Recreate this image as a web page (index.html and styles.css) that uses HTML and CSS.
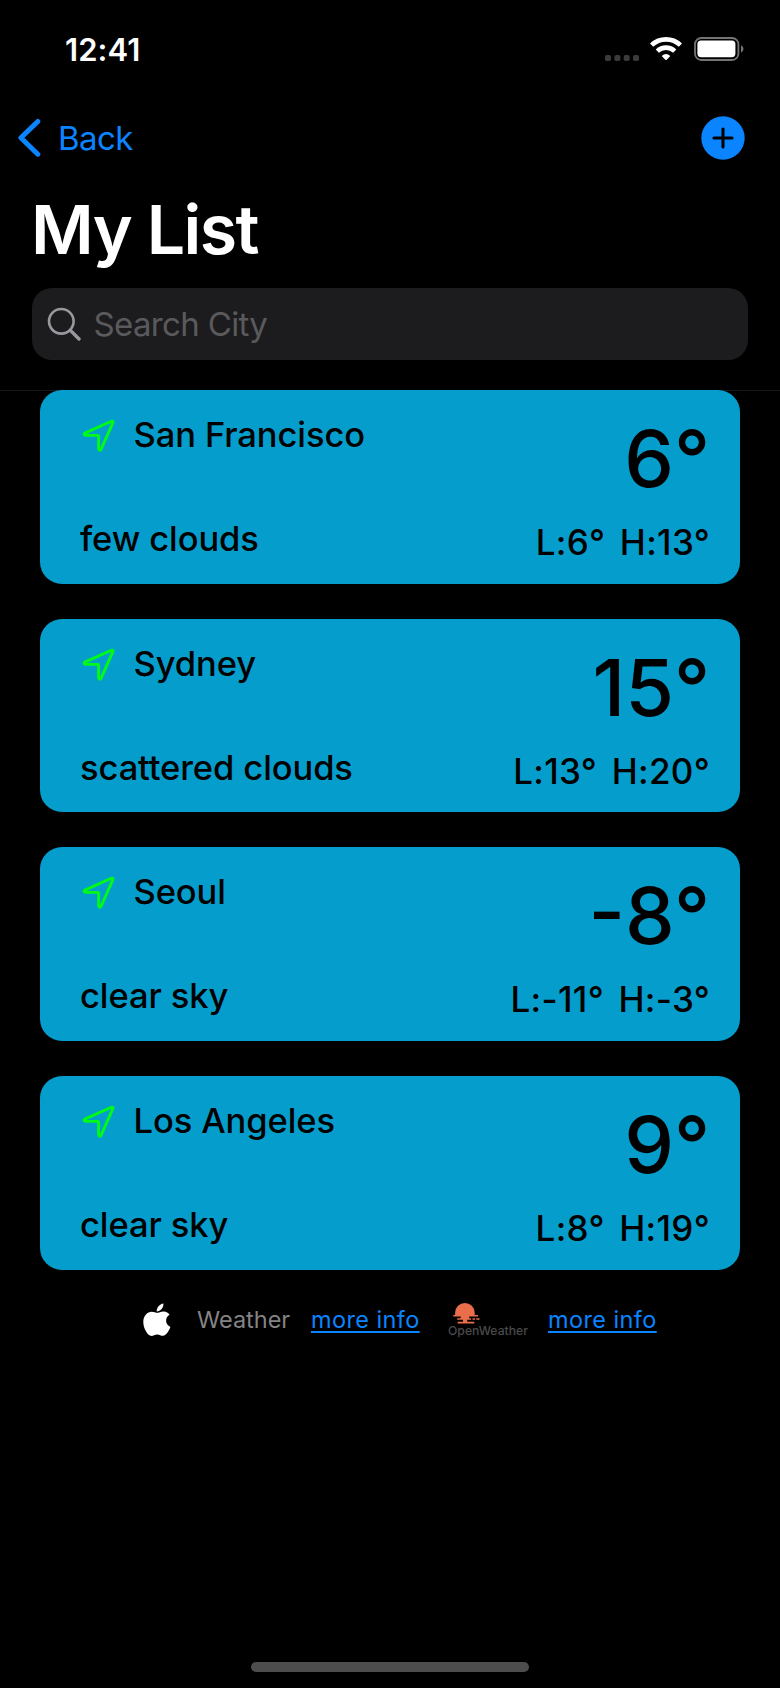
FILE: index.html
```html
<!DOCTYPE html>
<html lang="en">
<head>
<meta charset="utf-8">
<title>My List</title>
<link rel="stylesheet" href="styles.css">
</head>
<body>
<svg class="defs" aria-hidden="true">
  <symbol id="location" viewBox="0 0 34 34"><path d="M2.9 14.1 29.3 2.3Q31.7 1.5 30.8 3.9L19 30.3Q17.2 32.6 16.6 29.8V17.2Q16.6 16.4 15.8 16.4L3.4 16.3Q.8 15.4 2.9 14.1Z" fill="none" stroke="#00fb16" stroke-width="2.9" stroke-linejoin="round"/></symbol>
</svg>
<div class="screen">
  <header class="status">
    <span class="time">12:41</span>
    <div class="indicators">
      <svg class="dots" width="35" height="7" viewBox="0 0 35 7" fill="#3b3b3d"><rect width="6" height="6" rx="1.8"/><rect x="9.4" width="6" height="6" rx="1.8"/><rect x="18.7" width="6" height="6" rx="1.8"/><rect x="28" width="6" height="6" rx="1.8"/></svg>
      <svg class="wifi" width="32" height="24" viewBox="0 0 32 24" fill="none" stroke="#fff" stroke-width="4.6"><path d="M1.6 8.1C9.7.4 22.3.4 30.4 8.1"/><path d="M7.3 14.1C12.2 9.5 19.8 9.5 24.7 14.1"/><path d="M11.7 18.9Q16 15.2 20.3 18.9L16.7 22.7Q16 23.5 15.3 22.7Z" fill="#fff" stroke="none"/></svg>
      <svg class="battery" width="50" height="24" viewBox="0 0 50 24"><rect x="1" y="1" width="43.4" height="22" rx="6.2" fill="none" stroke="#747474" stroke-width="1.8"/><rect x="3.4" y="3.6" width="38" height="16.6" rx="3.6" fill="#fff"/><path d="M47 8.3Q49.5 9.4 49.5 12T47 15.7Z" fill="#747474"/></svg>
    </div>
  </header>
  <nav class="nav">
    <a class="back"><svg width="24" height="40" viewBox="0 0 24 40"><path d="M20.8 3.5 3.9 19.8 20.8 36.2" fill="none" stroke="#0a84ff" stroke-width="5" stroke-linecap="round" stroke-linejoin="round"/></svg><span>Back</span></a>
    <svg class="add" width="44" height="44" viewBox="0 0 44 44"><circle cx="22" cy="22" r="21.7" fill="#0a84ff"/><path d="M22 13v18M13 22h18" stroke="#000" stroke-width="3.1" stroke-linecap="round"/></svg>
  </nav>
  <h1 class="title">My List</h1>
  <div class="search">
    <svg width="34" height="34" viewBox="0 0 34 34" fill="none" stroke="#98989f" stroke-linecap="round"><circle cx="14.3" cy="14.3" r="12.3" stroke-width="2.6"/><path d="M23.4 23.4 32 32" stroke-width="3.4"/></svg>
    <span>Search City</span>
  </div>
  <main class="list">
    <article class="card">
      <div class="left"><div class="city"><svg><use href="#location"/></svg><span>San Francisco</span></div><div class="desc">few clouds</div></div>
      <div class="right"><div class="temp">6°</div><div class="range"><span>L:6°</span><span>H:13°</span></div></div>
    </article>
    <article class="card">
      <div class="left"><div class="city"><svg><use href="#location"/></svg><span>Sydney</span></div><div class="desc">scattered clouds</div></div>
      <div class="right"><div class="temp">15°</div><div class="range"><span>L:13°</span><span>H:20°</span></div></div>
    </article>
    <article class="card">
      <div class="left"><div class="city"><svg><use href="#location"/></svg><span>Seoul</span></div><div class="desc">clear sky</div></div>
      <div class="right"><div class="temp">-8°</div><div class="range"><span>L:-11°</span><span>H:-3°</span></div></div>
    </article>
    <article class="card">
      <div class="left"><div class="city"><svg><use href="#location"/></svg><span>Los Angeles</span></div><div class="desc">clear sky</div></div>
      <div class="right"><div class="temp">9°</div><div class="range"><span>L:8°</span><span>H:19°</span></div></div>
    </article>
  </main>
  <footer class="credits">
    <svg class="apple" width="28" height="34" viewBox="0 0 28 34" fill="#fff"><path d="M13.7 8.5C13.5 4.4 16.7.9 20.4.4 20.8 4.4 17.6 8.3 13.7 8.5ZM14.2 9.8C15.8 9.8 17.8 8.2 20.8 8.4 23.4 8.6 25.3 9.6 26.6 11.6 21.4 14.9 22.3 21.8 27.4 24 26.4 27 23.3 32.6 20 32.8 17.8 32.9 16.9 31.4 14.2 31.4S10.4 32.8 8.5 32.9C4.8 33 .3 25.5.3 19 .3 12.4 4.6 8.7 8.6 8.7 11 8.7 12.8 9.8 14.2 9.8Z"/></svg>
    <span class="weather">Weather</span>
    <a class="more first">more info</a>
    <div class="openweather">
      <svg width="28" height="22" viewBox="0 0 28 22" fill="#eb6e4b"><path d="M2.1 12V9.8A9.8 9.8 0 0 1 21.7 9.8V12H25v1.6H16.2v1.6H18v1.5H14.2v2.1H21.3v1.7H4.6v-1.7H10v-2H4.2v-1.6H7.7v-1.6H.3V12Z"/><path d="M19.5 15.3h2.6v1.5h-2.6zM23.3 15.3h3.2v1.5h-3.2z"/></svg>
      <span>OpenWeather</span>
    </div>
    <a class="more second">more info</a>
  </footer>
  <div class="home"></div>
</div>
</body>
</html>
```

FILE: styles.css
```css
* { box-sizing: border-box; }
body { margin: 0; background: #000; font-family: Inter, "Liberation Sans", sans-serif; }
.defs { display: none; }
svg { display: block; flex: none; }
span, a, .temp, .desc, .title { white-space: nowrap; }
.screen { width: 780px; height: 1688px; overflow: hidden; background: #000; display: flex; flex-direction: column; }

.status { height: 114px; flex: none; display: flex; justify-content: space-between; padding: 30px 36px 0 65px; }
.time { color: #fff; font-size: 31px; font-weight: 600; line-height: 40px; letter-spacing: .1px; }
.indicators { display: flex; padding-top: 7px; }
.dots { margin: 18px 10px 0 0; }
.battery { margin-left: 12px; }

.nav { height: 75px; flex: none; display: flex; justify-content: space-between; padding: 2px 35.5px 0 17px; }
.back { display: flex; color: #0a84ff; font-size: 33px; line-height: 40px; padding-top: 2px; gap: 17px; }
.back span { letter-spacing: -.6px; }

.title { margin: 0; height: 99px; flex: none; padding-left: 31px; color: #fff; font-size: 68px; font-weight: 600; line-height: 80px; letter-spacing: -1.6px; }

.search { height: 72px; flex: none; margin: 0 32px 30px; padding-left: 15px; border-radius: 20px; background: #1c1c1e; display: flex; align-items: center; gap: 12.5px; color: #5a5a5c; font-size: 33px; line-height: 72px; letter-spacing: -.65px; }

.list { flex: none; border-top: 1px solid #1a1a1b; padding: 0 40px; display: flex; flex-direction: column; gap: 35px; }
.card { height: 193.65px; border-radius: 22px; background: #059dcc; color: #000; font-size: 34.5px; font-weight: 500; line-height: 40px; display: flex; justify-content: space-between; padding: 25px 30px 0 40px; }
.card:first-child { margin-top: -1px; }
.left { letter-spacing: -.1px; }
.city { display: flex; height: 104px; gap: 17.5px; }
.city svg { width: 34px; height: 34px; margin: 4px 0 0 2px; }
.right { display: flex; flex-direction: column; align-items: flex-end; padding-top: 3px; }
.temp { font-size: 79px; line-height: 80px; height: 104px; }
.range { display: flex; gap: 14.5px; font-size: 35px; letter-spacing: .3px; }

.credits { display: flex; height: 50px; margin-top: 33px; padding-left: 142.5px; flex: none; font-size: 23.5px; line-height: 34px; }
.weather { color: #848484; margin-left: 26.5px; width: 114px; }
.more { color: #0a84ff; letter-spacing: .4px; text-decoration: underline; text-decoration-thickness: 2px; text-underline-offset: 3px; }
.first { width: 137px; }
.openweather { width: 100px; display: flex; flex-direction: column; }
.openweather svg { margin-left: 5px; }
.openweather span { color: #4a4a4b; font-size: 12.2px; font-weight: 500; line-height: 12px; }
.home { width: 278px; height: 10px; border-radius: 5px; background: #4d4d4d; margin: auto auto 16px; flex: none; }
```
